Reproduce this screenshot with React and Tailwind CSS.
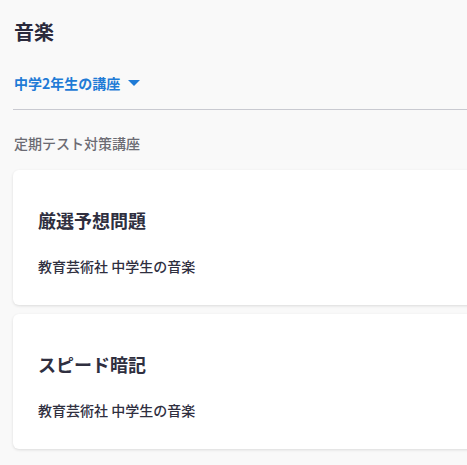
export default function App() {
  const items = [
    { title: '厳選予想問題', sub: '教育芸術社 中学生の音楽' },
    { title: 'スピード暗記', sub: '教育芸術社 中学生の音楽' },
  ];

  return (
    <div
      className="w-[467px] h-[465px] overflow-hidden bg-[#f9f9f9] pl-[13px] pt-[18px]"
      style={{ fontFamily: '"Noto Sans CJK JP", "Noto Sans", sans-serif' }}
    >
      <div className="w-[520px]">
        {/* Header */}
        <h1 className="pl-px text-[20px] leading-[28px] font-bold text-[#2a2a3c]">音楽</h1>

        <div className="mt-[27px] flex items-center pl-px h-[20px]">
          <span className="text-[14px] leading-[20px] font-bold text-[#1f7bd6]">中学2年生の講座</span>
          <svg className="ml-[8px]" width="12" height="6" viewBox="0 0 12 6">
            <path d="M0 0 H12 L6 6 Z" fill="#1f7bd6" />
          </svg>
        </div>

        <div className="mt-[16px] border-t border-[#c9cad1]" />

        <div className="mt-[23px] pl-px text-[14px] leading-[20px] font-medium text-[#6b6b73]">
          定期テスト対策講座
        </div>

        {/* Cards */}
        <div className="mt-[17px] flex flex-col gap-[9px]">
          {items.map((item) => (
            <div
              key={item.title}
              className="bg-white rounded-[6px] shadow-[0_1px_3px_rgba(0,0,0,0.12)] pl-[25px] pt-[38px] pb-[29px]"
            >
              <div className="text-[18px] leading-[24px] font-bold text-[#2f2f3f]">{item.title}</div>
              <div className="mt-[24px] text-[14px] leading-[20px] font-medium text-[#2f2f3f]">{item.sub}</div>
            </div>
          ))}
        </div>
      </div>
    </div>
  );
}
